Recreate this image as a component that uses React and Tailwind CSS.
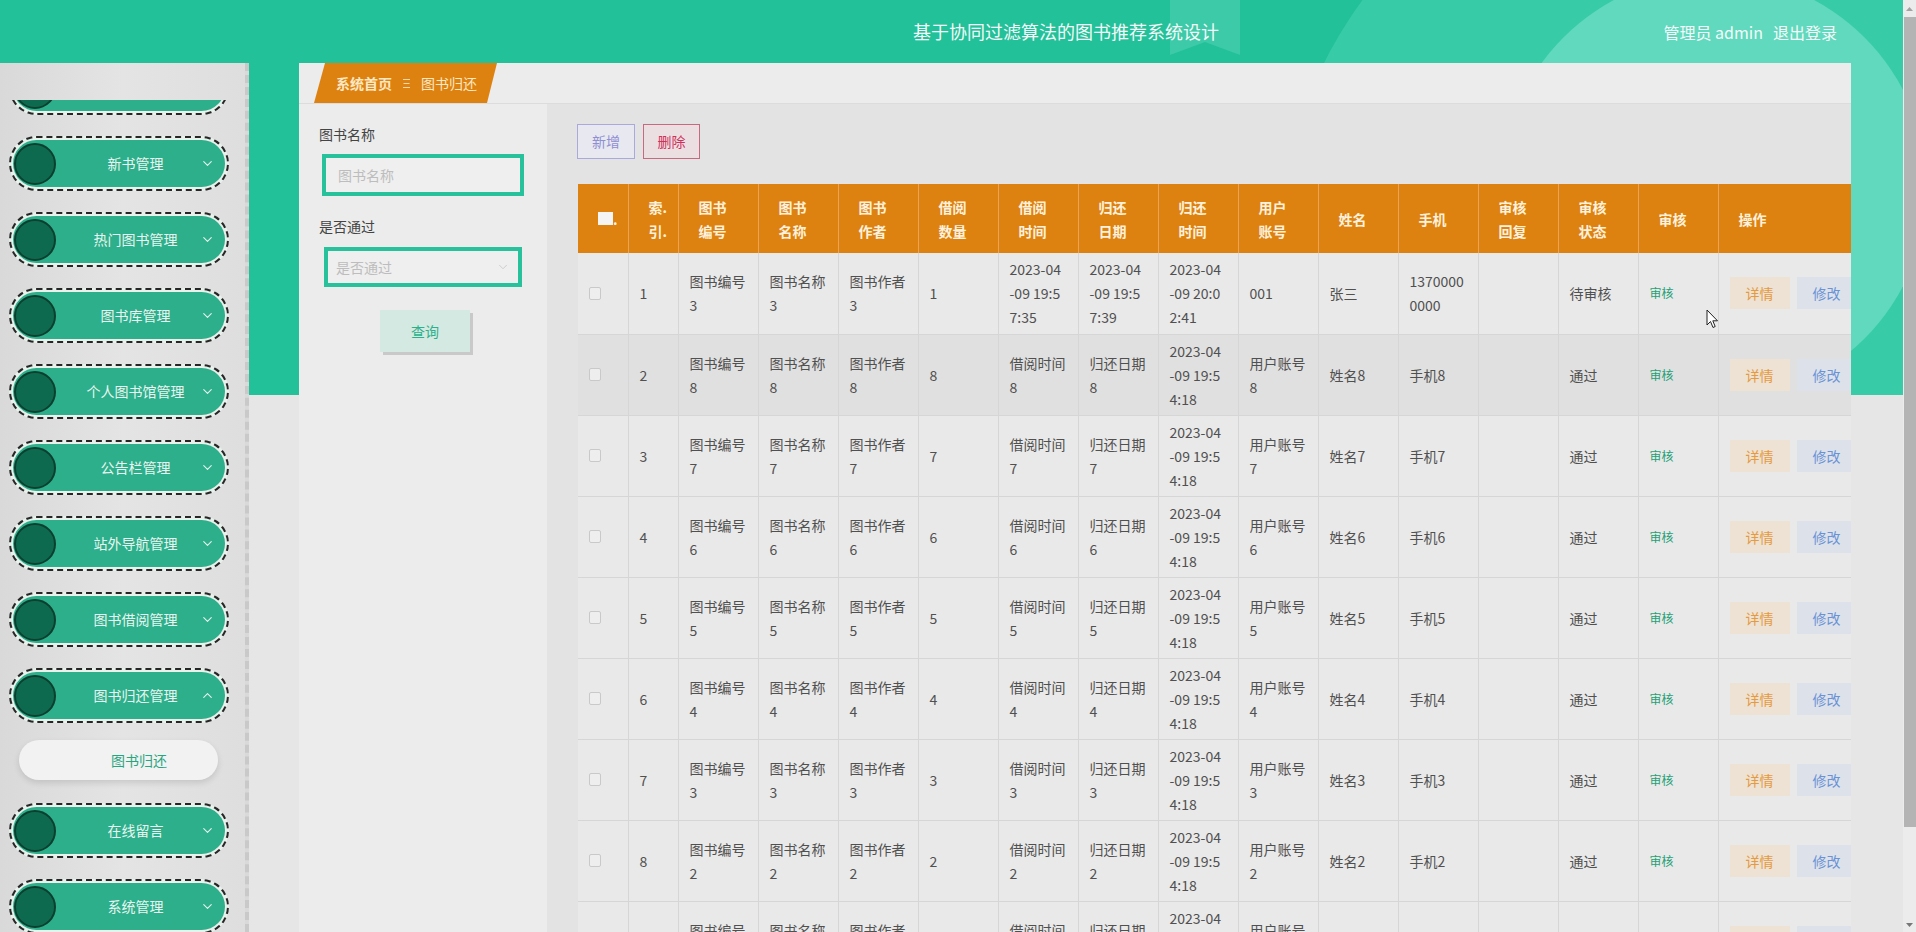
import { ChevronDown, ChevronUp } from "lucide-react";

const menus = [
  { label: "" },
  { label: "新书管理" },
  { label: "热门图书管理" },
  { label: "图书库管理" },
  { label: "个人图书馆管理" },
  { label: "公告栏管理" },
  { label: "站外导航管理" },
  { label: "图书借阅管理" },
  { label: "图书归还管理", open: true, sub: "图书归还" },
  { label: "在线留言" },
  { label: "系统管理" },
];

const heads = [
  ["索.", "引."],
  ["图书", "编号"],
  ["图书", "名称"],
  ["图书", "作者"],
  ["借阅", "数量"],
  ["借阅", "时间"],
  ["归还", "日期"],
  ["归还", "时间"],
  ["用户", "账号"],
  ["姓名"],
  ["手机"],
  ["审核", "回复"],
  ["审核", "状态"],
  ["审核"],
  ["操作"],
];

const widths = [50, 50, 80, 80, 80, 80, 80, 80, 80, 80, 80, 80, 80, 80, 80, 133];

const rows = [
  {
    id: 1,
    cells: [
      ["图书编号", "3"],
      ["图书名称", "3"],
      ["图书作者", "3"],
      ["1"],
      ["2023-04", "-09 19:5", "7:35"],
      ["2023-04", "-09 19:5", "7:39"],
      ["2023-04", "-09 20:0", "2:41"],
      ["001"],
      ["张三"],
      ["1370000", "0000"],
      [],
      ["待审核"],
    ],
  },
  ...[8, 7, 6, 5, 4, 3, 2, 1].map((n, i) => ({
    id: i + 2,
    cells: [
      ["图书编号", String(n)],
      ["图书名称", String(n)],
      ["图书作者", String(n)],
      [String(n)],
      ["借阅时间", String(n)],
      ["归还日期", String(n)],
      ["2023-04", "-09 19:5", "4:18"],
      ["用户账号", String(n)],
      ["姓名" + n],
      ["手机" + n],
      [],
      ["通过"],
    ],
  })),
];

const MenuItem = ({ label, open }) => (
  <div className="ml-[9px] h-[55px] w-[220px] shrink-0 rounded-full border-2 border-dashed border-[#262626] bg-[#e8f1ec] p-[2px]">
    <div className="flex h-full items-center rounded-full bg-[#2caf8a]">
      <div className="ml-[1px] h-[42px] w-[42px] shrink-0 rounded-full border-2 border-[#0c3f2f] bg-[#0e6a4e]" />
      <span className="flex-1 pl-[15px] text-center text-[14px] text-[#eaf6f1]">{label}</span>
      {open ? (
        <ChevronUp size={15} strokeWidth={1.8} className="mr-[10px] text-[#e6f4ee]" />
      ) : (
        <ChevronDown size={15} strokeWidth={1.8} className="mr-[10px] text-[#e6f4ee]" />
      )}
    </div>
  </div>
);

const Sidebar = () => (
  <aside className="h-full w-[249px] shrink-0 border-r-4 border-dashed border-[#c9c9c9] bg-gradient-to-r from-[#d9d9d9] via-[#e4e4e4] to-[#dedede] pt-[37px]">
    <div className="h-full overflow-hidden">
      <div className="-mt-[40px] flex flex-col">
        {menus.map((m, i) => (
          <div key={i} className={i === 0 ? "" : "mt-[21px]"}>
            <MenuItem label={m.label} open={m.open} />
            {m.sub && (
              <div className="ml-[19px] mt-[17px] mb-[2px] flex h-[40px] w-[199px] items-center justify-center rounded-full bg-[#f2f2f2] pl-[41px] text-[14px] text-[#27a57f] shadow-[0_3px_6px_rgba(0,0,0,0.12)]">
                {m.sub}
              </div>
            )}
          </div>
        ))}
      </div>
    </div>
  </aside>
);

const Filters = () => (
  <div className="h-full w-[248px] shrink-0 bg-[#ececec] pl-[20px] pt-[20px]">
    <div className="text-[14px] leading-[20px] text-[#444]">图书名称</div>
    <div className="ml-[3px] mt-[10px] flex h-[42px] w-[202px] items-center border-4 border-[#27c19c] bg-[#efefef] pl-[12px] text-[14px] text-[#bdbdbd]">
      图书名称
    </div>
    <div className="mt-[20px] text-[14px] leading-[20px] text-[#444]">是否通过</div>
    <div className="ml-[5px] mt-[11px] flex h-[40px] w-[198px] items-center justify-between border-4 border-[#27c19c] bg-[#efefef] pl-[8px] pr-[8px] text-[14px] text-[#bdbdbd]">
      <span>是否通过</span>
      <ChevronDown size={14} strokeWidth={1.5} className="text-[#c8c8c8]" />
    </div>
    <div className="ml-[61px] mt-[23px] flex h-[42px] w-[90px] items-center justify-center bg-[#d5e9e3] text-[14px] text-[#2bb08a] shadow-[3px_3px_0_#c9c9c9]">
      查询
    </div>
  </div>
);

const Lines = ({ lines }) => (
  <div>
    {lines.map((l, i) => (
      <div key={i}>{l}</div>
    ))}
  </div>
);

const Table = () => (
  <table className="table-fixed border-collapse text-[14px] leading-[24px]" style={{ width: 1273 }}>
    <colgroup>
      {widths.map((w, i) => (
        <col key={i} style={{ width: w }} />
      ))}
    </colgroup>
    <thead>
      <tr className="h-[69px] bg-[#dd8210] text-[#fff1dc]">
        <th className="border-r border-[#e9a553] pl-[20px] text-left align-middle font-bold">
          <div className="flex items-end">
            <span className="h-[13px] w-[15px] bg-[#f4f4f4]" />
            <span className="leading-[12px]">.</span>
          </div>
        </th>
        {heads.map((h, i) => (
          <th key={i} className="border-x border-[#e9a553] pl-[20px] text-left align-middle font-bold">
            <Lines lines={h} />
          </th>
        ))}
      </tr>
    </thead>
    <tbody>
      {rows.map((r) => (
        <tr
          key={r.id}
          className={`h-[81px] border-b border-[#d6d6d6] text-[#505050] ${r.id === 2 ? "bg-[#e0e0e0]" : "bg-[#e9e9e9]"}`}
        >
          <td className="border-r border-[#d6d6d6] pl-[11px] align-middle">
            <div className="h-[13px] w-[12px] rounded-[2px] border border-[#c9c9c9] bg-[#eeeeee]" />
          </td>
          <td className="border-x border-[#d6d6d6] pl-[11px] align-middle">{r.id}</td>
          {r.cells.map((c, i) => (
            <td key={i} className="border-x border-[#d6d6d6] pl-[11px] align-middle">
              <Lines lines={c} />
            </td>
          ))}
          <td className="border-x border-[#d6d6d6] pl-[11px] align-middle text-[12px] text-[#23a074]">审核</td>
          <td className="border-l border-[#d6d6d6] pl-[11px] align-middle">
            <div className="flex gap-[7px] whitespace-nowrap">
              <div className="flex h-[32px] w-[60px] shrink-0 items-center justify-center bg-[#ede2d3] text-[#e59a3f]">详情</div>
              <div className="flex h-[32px] w-[60px] shrink-0 items-center justify-center bg-[#dde2ea] text-[#6a92d6]">修改</div>
            </div>
          </td>
        </tr>
      ))}
    </tbody>
  </table>
);

const Decor = () => (
  <svg className="pointer-events-none absolute left-0 top-0" width="1903" height="395" viewBox="0 0 1903 395">
    <circle cx="1700" cy="250" r="420" fill="#37cba8" />
    <circle cx="1714" cy="188" r="213" fill="#60d9be" />
    <polygon points="1170,0 1240,0 1240,55 1205,42 1170,55" fill="#3ccaa8" />
  </svg>
);

export default function App() {
  return (
    <div className="flex h-[932px] w-[1916px] overflow-hidden font-['Noto_Sans_CJK_SC','Noto_Sans',sans-serif]">
      <div className="relative h-full w-[1903px] shrink-0 bg-[linear-gradient(to_bottom,#22c19a_395px,#e6e6e6_395px)]">
        <Decor />
        <header className="relative z-10 flex h-[63px] items-center">
          <h1 className="ml-[913px] text-[18px] font-normal text-[#f4fbf8]">基于协同过滤算法的图书推荐系统设计</h1>
          <div className="ml-auto mr-[66px] flex gap-[10px] text-[16px] text-[#f4fbf8]">
            <span>管理员 admin</span>
            <span>退出登录</span>
          </div>
        </header>
        <div className="relative z-10 flex h-[869px]">
          <Sidebar />
          <main className="ml-[50px] flex h-full w-[1552px] flex-col overflow-hidden bg-[#ececec]">
            <div className="h-[41px] shrink-0 border-b border-[#dcdcdc] bg-[#ececec]">
              <div className="ml-[15px] flex h-[40px] w-[183px] items-center bg-[#dd8210] pl-[22px] text-[14px] text-[#fde8c4] [clip-path:polygon(11px_0,100%_0,calc(100%-10px)_100%,0_100%)]">
                <span className="font-bold">系统首页</span>
                <svg className="ml-[11px] mr-[11px]" width="7" height="11" viewBox="0 0 7 11">
                  <path d="M0 1.5h7M0.5 5.5h6M0 9.5h7" stroke="#f6d7a8" strokeWidth="1" />
                </svg>
                <span>图书归还</span>
              </div>
            </div>
            <div className="flex min-h-0 flex-1">
              <Filters />
              <div className="h-full flex-1 overflow-hidden bg-[#e3e3e3] pl-[31px] pt-[20px]">
                <div className="flex gap-[8px] text-[14px]">
                  <div className="-ml-[1px] flex h-[35px] w-[58px] items-center justify-center border border-[#a9a9dc] bg-[#e8e8f0] text-[#8f8fd3]">新增</div>
                  <div className="flex h-[35px] w-[57px] items-center justify-center border border-[#c46b80] bg-[#ecdfe2] text-[#d0305a]">删除</div>
                </div>
                <div className="mt-[25px]">
                  <Table />
                </div>
              </div>
            </div>
          </main>
        </div>
        <svg className="pointer-events-none absolute left-[1706px] top-[309px] z-20" width="13" height="20" viewBox="0 0 13 20">
          <path d="M1 1 L1 16 L4.5 12.5 L7 18.5 L9.2 17.5 L6.8 11.8 L11.5 11.8 Z" fill="#fff" stroke="#222" strokeWidth="1" />
        </svg>
      </div>
      <div className="flex h-full w-[13px] shrink-0 flex-col bg-[#ececec]">
        <div className="flex h-[17px] items-center justify-center">
          <svg width="7" height="4" viewBox="0 0 7 4">
            <path d="M0 4 L3.5 0 L7 4 Z" fill="#a3a3a3" />
          </svg>
        </div>
        <div className="ml-[1px] h-[810px] bg-[#b4b4b4]" />
        <div className="flex flex-1 items-end justify-center pb-[5px]">
          <svg width="7" height="4" viewBox="0 0 7 4">
            <path d="M0 0 L3.5 4 L7 0 Z" fill="#777" />
          </svg>
        </div>
      </div>
    </div>
  );
}
